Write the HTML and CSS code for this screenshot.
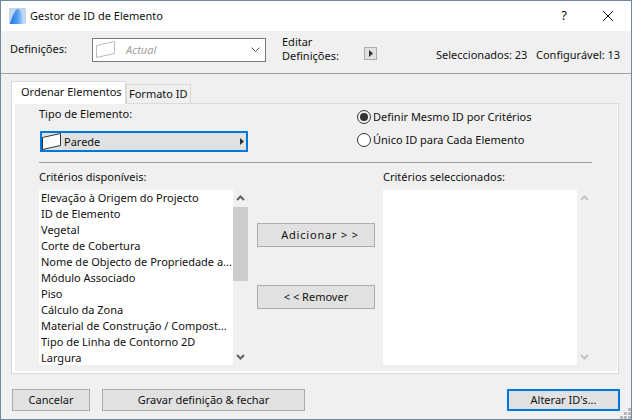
FILE: index.html
```html
<!DOCTYPE html>
<html lang="pt">
<head>
<meta charset="utf-8">
<title>Gestor de ID de Elemento</title>
<link rel="stylesheet" href="styles.css">
</head>
<body>
<div class="window">
  <header class="titlebar">
    <svg class="app-icon" width="17" height="16" viewBox="0 0 17 16">
      <defs><linearGradient id="ag" x1="0" x2="1" y1="0" y2="0"><stop offset="0" stop-color="#1f6fe0"/><stop offset="0.55" stop-color="#5aa5f5"/><stop offset="1" stop-color="#d8eafc"/></linearGradient></defs>
      <rect x="0" y="0" width="17" height="16" fill="#c4d6ee"/>
      <path d="M1 16C3 9 6 1 9 1C12 1 14 9 16 16Z" fill="url(#ag)"/>
    </svg>
    <span class="title">Gestor de ID de Elemento</span>
    <span class="help">?</span>
    <svg class="close" width="12" height="12" viewBox="0 0 12 12"><path d="M1 1L11 11M11 1L1 11" stroke="#222" stroke-width="1" fill="none"/></svg>
  </header>

  <section class="toolbar">
    <span class="tb-label">Definições:</span>
    <div class="select">
      <svg width="19" height="17" viewBox="0 0 19 17"><path d="M0.500 4.500L18.500 0.500V12.500L0.500 16.500Z" fill="#fff" stroke="#bbb"/></svg>
      <span class="select-text">Actual</span>
      <svg class="select-chev" width="9" height="5" viewBox="0 0 9 5"><path d="M0.500 0.500L4.500 4.500L8.500 0.500" stroke="#555" fill="none"/></svg>
    </div>
    <span class="edit-label">Editar<br>Definições:</span>
    <button class="mini-btn"><svg width="4" height="7" viewBox="0 0 4 7"><path d="M0 0L4 3.500L0 7Z" fill="#333"/></svg></button>
    <span class="count count-a">Seleccionados: 23</span>
    <span class="count count-b">Configurável: 13</span>
  </section>

  <nav class="tabs">
    <div class="tab tab-active">Ordenar Elementos</div>
    <div class="tab tab-idle">Formato ID</div>
  </nav>

  <main class="panel">
    <div class="panel-inner">
      <div class="top-row">
        <div class="type-col">
          <div class="label">Tipo de Elemento:</div>
          <div class="type-field">
            <svg width="19" height="17" viewBox="0 0 19 17"><path d="M0.500 4.500L18.500 0.500V12.500L0.500 16.500Z" fill="#fff" stroke="#333"/></svg>
            <span class="type-text">Parede</span>
            <svg class="type-arrow" width="4" height="7" viewBox="0 0 4 7"><path d="M0 0L4 3.500L0 7Z" fill="#333"/></svg>
          </div>
        </div>
        <div class="radio-col">
          <div class="radio-row">
            <span class="radio radio-on"></span><span>Definir Mesmo ID por Critérios</span>
          </div>
          <div class="radio-row">
            <span class="radio"></span><span>Único ID para Cada Elemento</span>
          </div>
        </div>
      </div>
      <hr class="rule">
      <div class="lists">
        <div class="list-col">
          <div class="label">Critérios disponíveis:</div>
          <div class="list-wrap">
            <ul class="list">
              <li>Elevação à Origem do Projecto</li>
              <li>ID de Elemento</li>
              <li>Vegetal</li>
              <li>Corte de Cobertura</li>
              <li>Nome de Objecto de Propriedade a...</li>
              <li>Módulo Associado</li>
              <li>Piso</li>
              <li>Cálculo da Zona</li>
              <li>Material de Construção / Compost...</li>
              <li>Tipo de Linha de Contorno 2D</li>
              <li>Largura</li>
            </ul>
            <div class="scroll">
              <svg class="chev" width="9" height="6" viewBox="0 0 9 6"><path d="M1 5L4.500 1.500L8 5" stroke="#606060" stroke-width="2" fill="none"/></svg>
              <div class="thumb"></div>
              <svg class="chev chev-down" width="9" height="6" viewBox="0 0 9 6"><path d="M1 1L4.500 4.500L8 1" stroke="#606060" stroke-width="2" fill="none"/></svg>
            </div>
          </div>
        </div>
        <div class="move-col">
          <button class="btn btn-move btn-add">Adicionar &gt; &gt;</button>
          <button class="btn btn-move">&lt; &lt; Remover</button>
        </div>
        <div class="list-col">
          <div class="label label-sel">Critérios seleccionados:</div>
          <div class="list-wrap">
            <div class="list"></div>
            <div class="scroll scroll-off">
              <svg class="chev" width="9" height="6" viewBox="0 0 9 6"><path d="M1 5L4.500 1.500L8 5" stroke="#c4c4c4" stroke-width="2" fill="none"/></svg>
              <svg class="chev chev-down" width="9" height="6" viewBox="0 0 9 6"><path d="M1 1L4.500 4.500L8 1" stroke="#c4c4c4" stroke-width="2" fill="none"/></svg>
            </div>
          </div>
        </div>
      </div>
    </div>
  </main>

  <footer class="footer">
    <button class="btn btn-cancel">Cancelar</button>
    <button class="btn btn-save">Gravar definição &amp; fechar</button>
    <button class="btn btn-primary">Alterar ID's...</button>
  </footer>

  <svg class="grip" width="11" height="11" viewBox="0 0 11 11" fill="#b8b8b8">
    <rect x="8" y="0" width="3" height="3"/>
    <rect x="4" y="4" width="3" height="3"/><rect x="8" y="4" width="3" height="3"/>
    <rect x="0" y="8" width="3" height="3"/><rect x="4" y="8" width="3" height="3"/><rect x="8" y="8" width="3" height="3"/>
  </svg>
</div>
</body>
</html>
```
FILE: styles.css
```css
* { box-sizing: border-box; }
html, body { margin: 0; padding: 0; }
body { width: 632px; height: 420px; overflow: hidden; background: #f0f0f0; }

.window {
  position: relative;
  width: 632px;
  height: 420px;
  border: 1px solid #6d8aa3;
  background: #f0f0f0;
  color: #111;
  font: 11px/16px "Noto Sans", "Open Sans", sans-serif;
  display: flex;
  flex-direction: column;
}

.titlebar {
  height: 30px;
  flex: none;
  background: #fff;
  display: flex;
  align-items: center;
  padding-left: 8px;
}
.title { margin-left: 4px; margin-top: 0; }
.help { margin-left: auto; margin-top: -2px; width: 12px; text-align: center; font-size: 13px; }
.close { margin-left: 32px; margin-right: 17px; margin-top: -1px; }
.app-icon { margin-top: -1px; }

.toolbar {
  height: 43px;
  flex: none;
  border-bottom: 1px solid #a0a0a0;
  display: flex;
  align-items: center;
  padding-left: 9px;
}
.tb-label { width: 82px; margin-top: -6px; }
.select {
  width: 174px;
  height: 24px;
  margin-top: -5px;
  border: 1px solid #7a7a7a;
  background: #fff;
  display: flex;
  align-items: center;
  padding: 0 5px 0 3px;
}
.select-text { margin-left: 11px; color: #a0a0a0; font-style: italic; }
.select-chev { margin-left: auto; margin-right: 0; }
.edit-label { margin-left: 16px; width: 82px; line-height: 14px; margin-top: -7px; }
.mini-btn {
  width: 13px;
  height: 13px;
  padding: 0;
  border: 1px solid #adadad;
  background: #e1e1e1;
  display: flex;
  align-items: center;
  justify-content: center;
  margin-top: 3px;
}
.count { margin-top: 5px; white-space: nowrap; }
.count-a { margin-left: 59px; width: 100px; }
.count-b { margin-left: 0; }

.tabs {
  height: 24px;
  flex: none;
  margin: 7px 0 0 10px;
  display: flex;
  align-items: flex-end;
  position: relative;
  z-index: 1;
}
.tab { border: 1px solid #d9d9d9; white-space: nowrap; }
.tab-active {
  width: 115px;
  height: 24px;
  border-bottom: none;
  background: #fff;
  padding: 2px 0 0 9px;
}
.tab-idle {
  width: 65px;
  height: 19px;
  border-bottom: none;
  background: #f0f0f0;
  padding: 1px 0 0 2px;
  margin-bottom: 2px;
}

.panel {
  width: 608px;
  height: 271px;
  flex: none;
  margin: -2px 0 0 10px;
  border: 1px solid #d9d9d9;
  background: #fff;
  padding: 0 1px 2px 3px;
}
.panel-inner {
  height: 100%;
  background: #f0f0f0;
  padding: 0 0 5px 24px;
  display: flex;
  flex-direction: column;
  position: relative;
  z-index: 2;
}

.top-row { display: flex; height: 57px; flex: none; }
.type-col { width: 318px; padding-top: 2px; }
.label { height: 16px; }
.type-field {
  width: 208px;
  height: 21px;
  margin: 9px 0 0 1px;
  border: 2px solid #0078d7;
  background: #e1e1e1;
  display: flex;
  align-items: center;
}
.type-field svg:first-child { margin-top: -1px; flex: none; }
.type-text { margin-left: 3px; }
.type-arrow { margin-left: auto; margin-right: 2px; }

.radio-col { padding-top: 5px; display: flex; flex-direction: column; gap: 7px; }
.radio-row { display: flex; align-items: center; gap: 2px; height: 16px; }
.radio {
  width: 14px;
  height: 14px;
  border: 1px solid #333;
  border-radius: 50%;
  background: #fff;
  flex: none;
  position: relative;
}
.radio-on { background: #f0f0f0; }
.radio-on::after {
  content: "";
  position: absolute;
  left: 2px;
  top: 2px;
  width: 8px;
  height: 8px;
  border-radius: 50%;
  background: #333;
}

.rule {
  width: 553px;
  height: 1px;
  flex: none;
  margin: 1px 0 0;
  border: 0;
  background: #a0a0a0;
}

.lists { display: flex; margin-top: 6px; flex: 1; min-height: 0; }
.list-col { display: flex; flex-direction: column; }
.list-wrap { display: flex; height: 175px; margin-top: 5px; }
.list {
  width: 194px;
  height: 175px;
  margin: 0;
  padding: 0 0 0 2px;
  list-style: none;
  background: #fff;
  white-space: nowrap;
  overflow: hidden;
}
.list li { height: 16px; }
.scroll {
  width: 15px;
  height: 175px;
  display: flex;
  flex-direction: column;
  align-items: center;
}
.chev { margin-top: 5px; flex: none; }
.chev-down { margin-top: auto; margin-bottom: 5px; }
.thumb { width: 15px; height: 74px; background: #cdcdcd; margin-top: 6px; flex: none; }

.move-col {
  width: 135px;
  padding: 54px 0 0 9px;
  display: flex;
  flex-direction: column;
  gap: 38px;
}
.btn {
  font: inherit;
  color: #111;
  padding: 0;
  border: 1px solid #adadad;
  background: #e1e1e1;
  text-align: center;
}
.btn-move { width: 118px; height: 24px; }
.btn-add { letter-spacing: 0.8px; padding-left: 8px; }

.footer {
  display: flex;
  margin: 15px 0 0 11px;
  height: 22px;
}
.btn-cancel { width: 78px; }
.btn-save { width: 203px; margin-left: 12px; }
.btn-primary { width: 113px; margin-left: 202px; border: 2px solid #0078d7; }

.grip { position: absolute; right: 0; bottom: 0; }
```
